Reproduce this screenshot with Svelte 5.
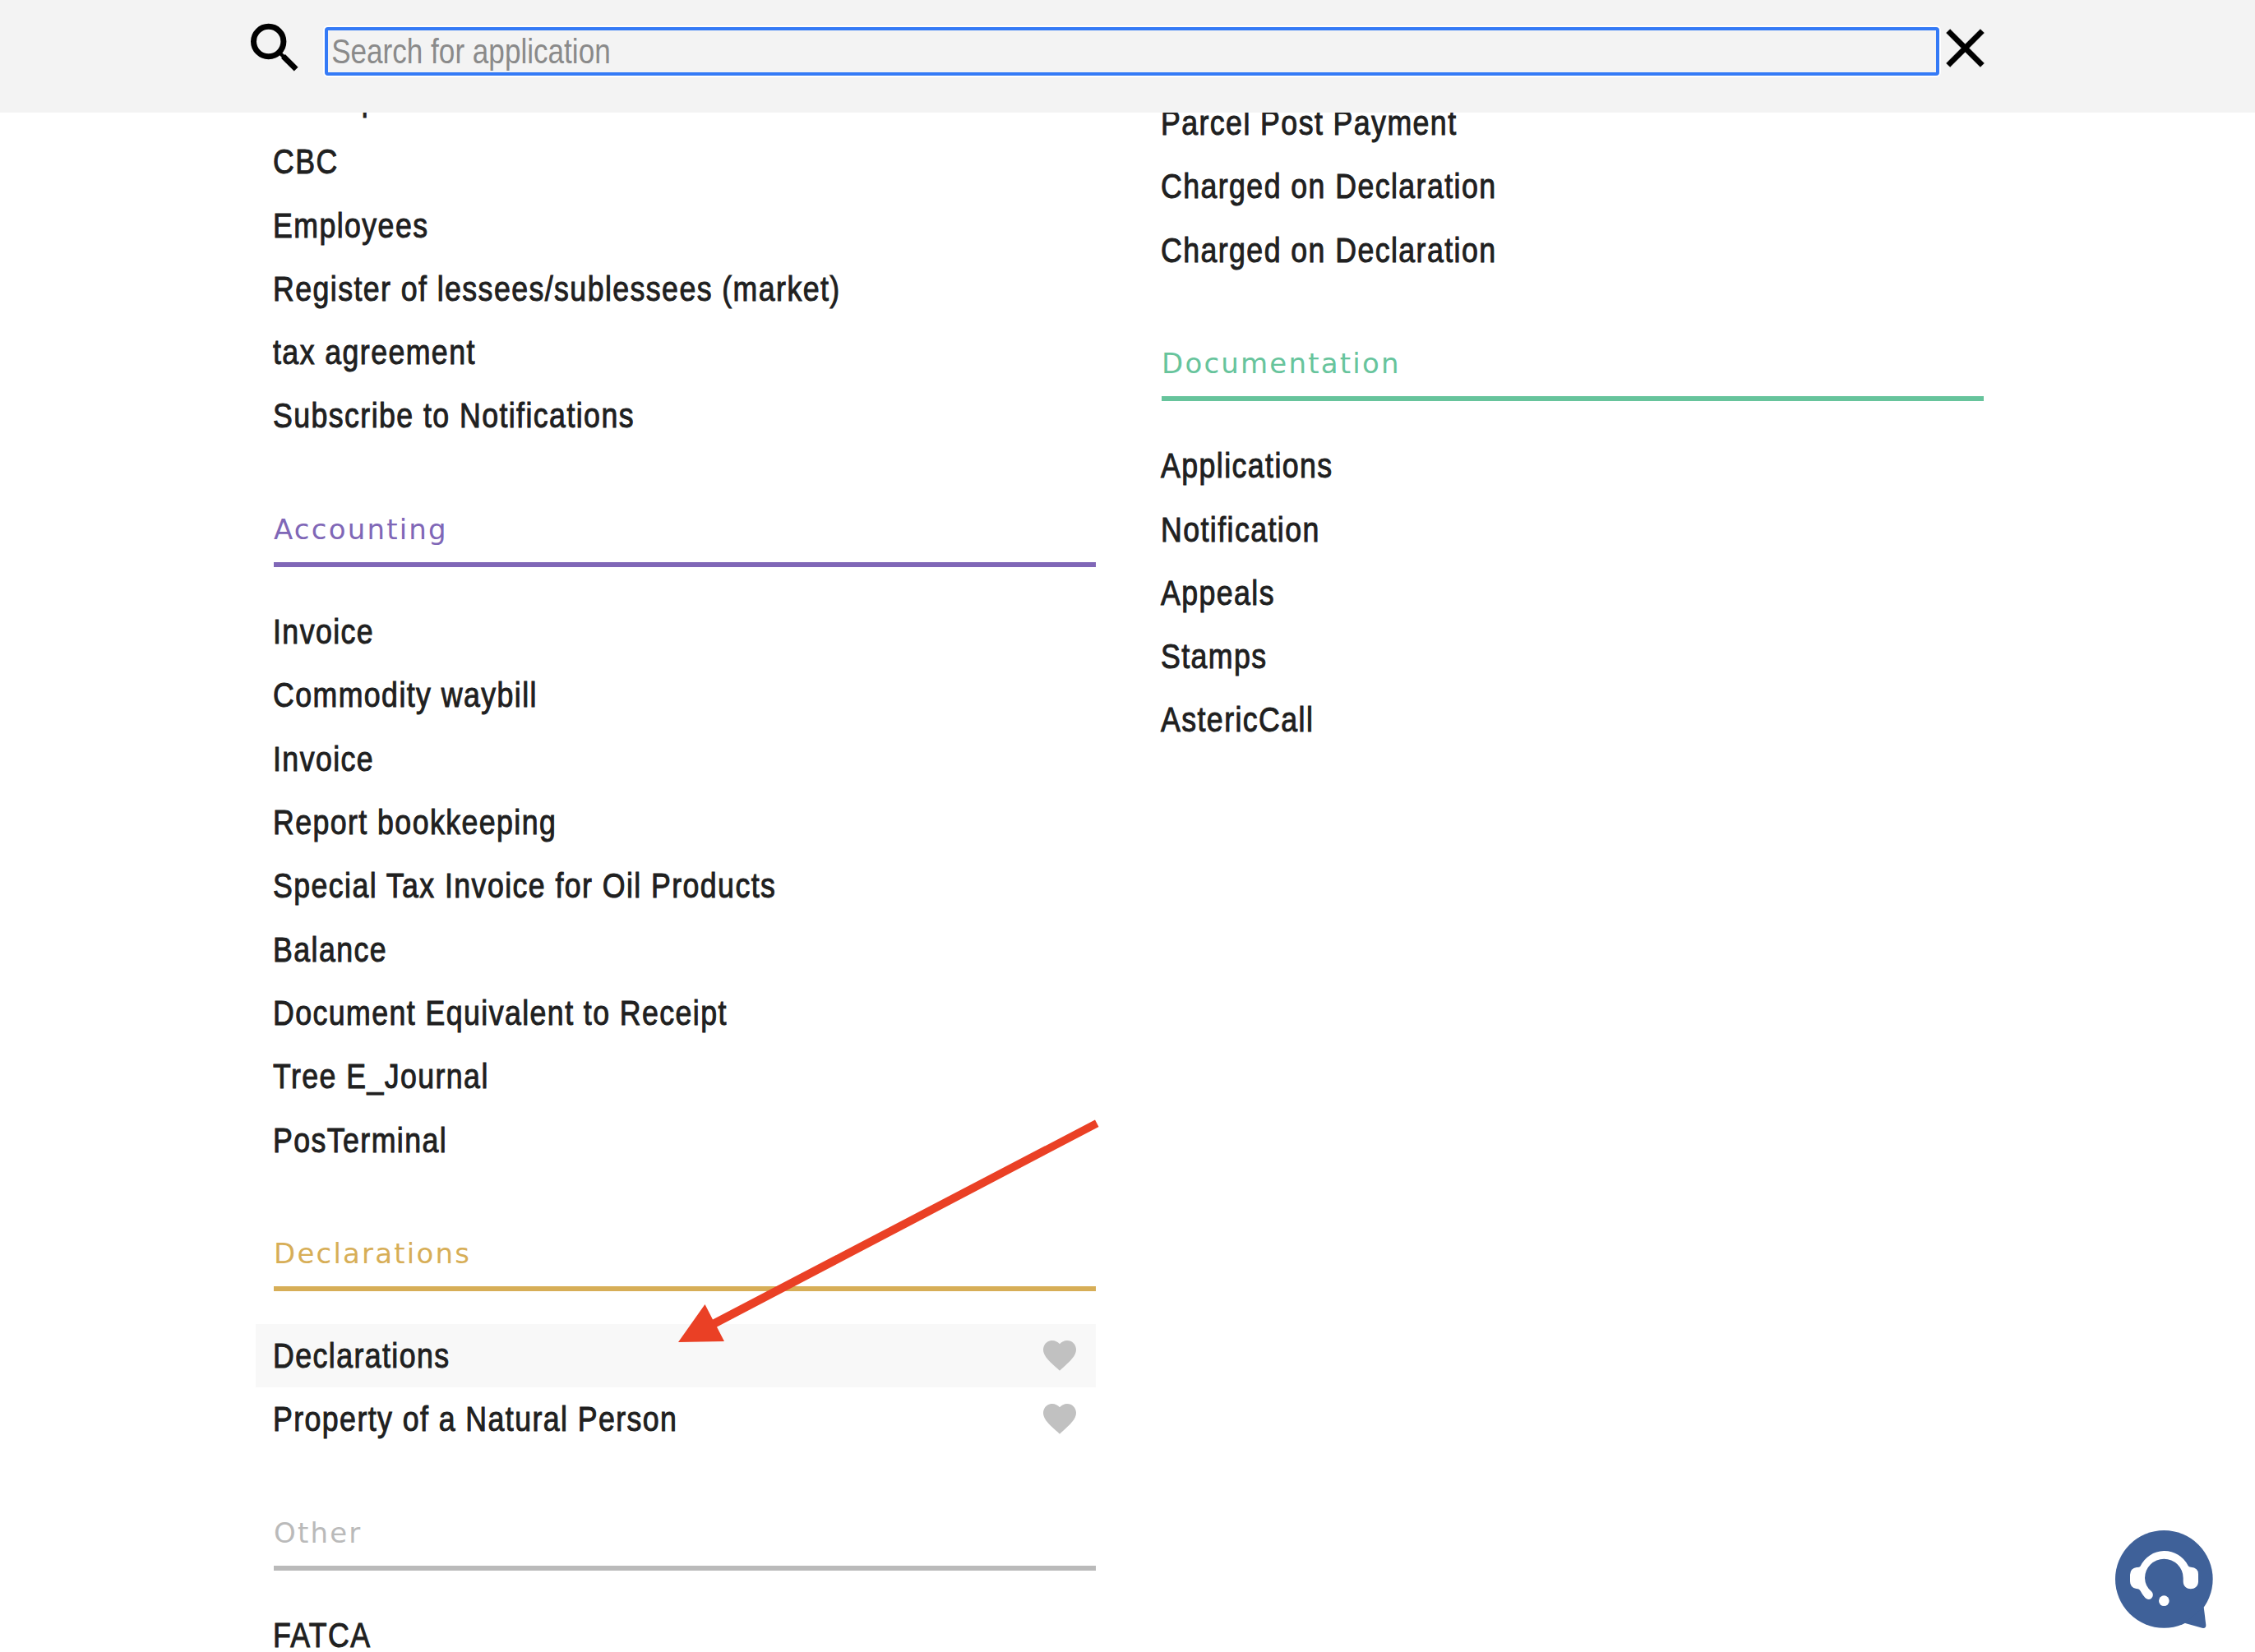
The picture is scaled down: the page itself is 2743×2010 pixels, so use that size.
<script lang="ts">
	type Item = { name: string; fav?: boolean; active?: boolean };
	type Group = { title?: string; color?: string; items: Item[] };

	const left: Group[] = [
		{
			items: [
				{ name: 'Workspace' },
				{ name: 'CBC' },
				{ name: 'Employees' },
				{ name: 'Register of lessees/sublessees (market)' },
				{ name: 'tax agreement' },
				{ name: 'Subscribe to Notifications' }
			]
		},
		{
			title: 'Accounting',
			color: '#8067b7',
			items: [
				{ name: 'Invoice' },
				{ name: 'Commodity waybill' },
				{ name: 'Invoice' },
				{ name: 'Report bookkeeping' },
				{ name: 'Special Tax Invoice for Oil Products' },
				{ name: 'Balance' },
				{ name: 'Document Equivalent to Receipt' },
				{ name: 'Tree E_Journal' },
				{ name: 'PosTerminal' }
			]
		},
		{
			title: 'Declarations',
			color: '#d7ae57',
			items: [
				{ name: 'Declarations', fav: true, active: true },
				{ name: 'Property of a Natural Person', fav: true }
			]
		},
		{
			title: 'Other',
			color: '#bababa',
			items: [{ name: 'FATCA' }]
		}
	];

	const right: Group[] = [
		{
			items: [
				{ name: 'Parcel Post Payment' },
				{ name: 'Charged on Declaration' },
				{ name: 'Charged on Declaration' }
			]
		},
		{
			title: 'Documentation',
			color: '#67c49c',
			items: [
				{ name: 'Applications' },
				{ name: 'Notification' },
				{ name: 'Appeals' },
				{ name: 'Stamps' },
				{ name: 'AstericCall' }
			]
		}
	];

	let query = $state('');
</script>

{#snippet column(groups: Group[])}
	{#each groups as group}
		<section class="group">
			{#if group.title}
				<h2 class="group-title" style="color: {group.color}">{group.title}</h2>
			{/if}
			<ul class="items">
				{#each group.items as item}
					<li class="item" class:active={item.active}>
						<span class="name">{item.name}</span>
						{#if item.fav}
							<svg class="heart" viewBox="0 0 24 24" aria-hidden="true">
								<path d="M12 21.35l-1.45-1.32C5.4 15.36 2 12.28 2 8.5 2 5.42 4.42 3 7.5 3c1.74 0 3.41.81 4.5 2.09C13.09 3.81 14.76 3 16.5 3 19.58 3 22 5.42 22 8.5c0 3.78-3.4 6.86-8.55 11.54L12 21.35z" />
							</svg>
						{/if}
					</li>
				{/each}
			</ul>
		</section>
	{/each}
{/snippet}

<div class="page">
	<header class="bar">
		<svg class="search-icon" viewBox="0 0 80 80" aria-hidden="true">
			<circle cx="31.700" cy="31.500" r="18.200" />
			<path class="neck" d="M44 44l7 7" />
			<path class="handle" d="M49.500 49.500l15.700 15.700" />
		</svg>
		<div class="search">
			<input type="text" placeholder="Search for application" bind:value={query} />
		</div>
		<button class="close" type="button" aria-label="Close">
			<svg viewBox="0 0 24 24" aria-hidden="true">
				<path d="M19 6.41L17.59 5 12 10.59 6.41 5 5 6.41 10.59 12 5 17.59 6.41 19 12 13.41 17.59 19 19 17.59 13.41 12z" />
			</svg>
		</button>
	</header>

	<main class="columns">
		<div class="col col-left">{@render column(left)}</div>
		<div class="col col-right">{@render column(right)}</div>
	</main>

	<svg class="arrow" viewBox="0 0 514 273" aria-hidden="true">
		<path d="M0 272 32.5 226 42 244.500 507 1.500 511.500 10 47 253.500 56 271z" />
	</svg>

	<button class="chat" type="button" aria-label="Support">
		<svg viewBox="0 0 360 360" aria-hidden="true">
			<circle class="bubble" cx="178" cy="178" r="178" />
			<path class="bubble" d="M253 338 317 356.500Q332 359 331 345L323 280z" />
			<path
				class="headset"
				d="M91 132A97 97 0 0 1 266 129Q268 134 276 134.500 303 136 303 160V187C303 223 248 223 248 187V174A70 70 0 0 0 108 174Q109 204 132 223C146 236 131 261 113 249Q103 241 92 221 88 212 77 213 54 209 54 186V162Q55 138 78 135 87 136 91 132z"
			/>
			<circle class="headset" cx="178" cy="257" r="19" />
		</svg>
	</button>
</div>

<style>
	:global(body) {
		background: #fff;
	}
	.page {
		position: relative;
		display: flex;
		flex-direction: column;
		height: 2010px;
		overflow: hidden;
		font-family: 'Liberation Sans', Arial, sans-serif;
		color: #202020;
	}

	.bar {
		position: relative;
		z-index: 1;
		flex: none;
		box-sizing: border-box;
		display: flex;
		align-items: flex-start;
		height: 137px;
		padding: 19px 0 0 295px;
		background: #f3f3f3;
	}
	.search-icon {
		width: 80px;
		height: 80px;
		flex: none;
		fill: none;
		stroke: #000;
		stroke-width: 7;
	}
	.search-icon .neck {
		stroke-width: 4.500;
	}
	.search-icon .handle {
		stroke-width: 6.800;
	}
	.search {
		box-sizing: border-box;
		width: 1964px;
		height: 59px;
		margin: 14px 0 0 20px;
		border: 4px solid #347af6;
		border-radius: 4px;
		box-shadow: 0 0 0 2px #fff;
	}
	/* condensed lettering, so the field is laid out wider and squeezed back */
	.search input {
		box-sizing: border-box;
		display: block;
		width: 2360px;
		height: 51px;
		padding: 0 5px;
		border: 0;
		outline: none;
		background: transparent;
		font-family: inherit;
		font-size: 42.500px;
		transform: scaleX(0.826);
		transform-origin: left;
	}
	.search input::placeholder {
		color: #8a8a8a;
	}
	.close {
		margin-left: -8px;
		padding: 0;
		border: 0;
		background: none;
		cursor: pointer;
	}
	.close svg {
		display: block;
		width: 79px;
		height: 79px;
		stroke: #000;
		stroke-width: 0.100;
	}

	.columns {
		display: grid;
		grid-template-columns: 1022px 1022px;
		column-gap: 58px;
		align-items: start;
		padding-left: 311px;
	}
	.col-left {
		margin-top: -56.200px;
	}
	.col-right {
		margin-top: -26.200px;
	}
	.group-title {
		box-sizing: border-box;
		height: 145.400px;
		margin: 0 0 40px 22px;
		padding-top: 77px;
		border-bottom: 6px solid currentColor;
		font: 400 34px/44px 'DejaVu Sans', sans-serif;
		letter-spacing: 2.200px;
	}
	.items {
		margin: 0;
		padding: 0;
		list-style: none;
	}
	.item {
		display: flex;
		align-items: center;
		justify-content: space-between;
		height: 77.300px;
		padding: 0 20px 0 20.500px;
	}
	.item.active {
		background: #f8f8f8;
	}
	.name {
		font-size: 42.500px;
		line-height: 39px;
		letter-spacing: 1.700px;
		white-space: nowrap;
		-webkit-text-stroke: 1px currentColor;
		transform: scaleX(0.84);
		transform-origin: left;
	}
	.heart {
		width: 48px;
		height: 48px;
		margin-top: -1px;
		fill: #c1c1c1;
	}

	.arrow {
		position: absolute;
		left: 825px;
		top: 1361px;
		width: 514px;
		height: 273px;
		fill: #ea4025;
		pointer-events: none;
	}

	.chat {
		position: absolute;
		left: 2573px;
		top: 1862px;
		padding: 0;
		border: 0;
		background: none;
		cursor: pointer;
	}
	.chat svg {
		display: block;
		width: 120px;
		height: 120px;
	}
	.bubble {
		fill: #3f6199;
	}
	.headset {
		fill: #fff;
	}
</style>
